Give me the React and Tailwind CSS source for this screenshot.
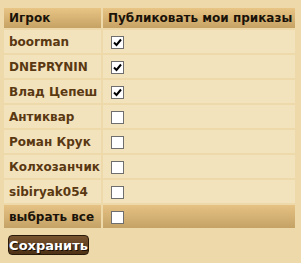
import React from "react";

const rows = [
  ["boorman", true],
  ["DNEPRYNIN", true],
  ["Влад Цепеш", true],
  ["Антиквар", false],
  ["Роман Крук", false],
  ["Колхозанчик", false],
  ["sibiryak054", false],
];

function Box({ checked }) {
  return (
    <span className="inline-flex w-[13px] h-[13px] bg-white border border-[#6e6e6e] items-center justify-center align-middle">
      {checked && (
        <svg width="9" height="9" viewBox="0 0 9 9">
          <path d="M1 4.5 L3.5 7 L8 1.5" stroke="#000" strokeWidth="2" fill="none" />
        </svg>
      )}
    </span>
  );
}

export default function App() {
  return (
    <div
      className="w-[301px] h-[263px] bg-[#eed9ab] pl-[2px] pt-[6px]"
      style={{ fontFamily: '"DejaVu Sans", Verdana, sans-serif' }}
    >
      <table className="border-separate border-spacing-[2px] text-[12px] font-bold">
        <thead>
          <tr className="bg-gradient-to-b from-[#e8c585] to-[#c6a264] text-[#1a1208]">
            <th className="w-[97px] h-[20px] p-0 pl-[5px] text-left">Игрок</th>
            <th className="w-[192px] h-[20px] p-0 pl-[5px] text-left">Публиковать мои приказы</th>
          </tr>
        </thead>
        <tbody>
          {rows.map(([name, c]) => (
            <tr key={name} className="bg-[#f3e3bd] text-[#5a3812]">
              <td className="h-[23px] p-0 pl-[5px]">{name}</td>
              <td className="h-[23px] p-0 pl-[8px]">
                <Box checked={c} />
              </td>
            </tr>
          ))}
          <tr className="bg-gradient-to-b from-[#e6c384] to-[#c4a165] text-[#1a1208]">
            <td className="h-[23px] p-0 pl-[5px]">выбрать все</td>
            <td className="h-[23px] p-0 pl-[8px]">
              <Box checked={false} />
            </td>
          </tr>
        </tbody>
      </table>
      <button
        className="ml-[6px] mt-[5px] w-[81px] h-[20px] rounded-[4px] border border-[#2a1a0a] bg-gradient-to-b from-[#7a5530] to-[#4e3216] text-white text-[13px] font-bold leading-none"
        style={{ textShadow: "1px 1px 0 #1a0e04" }}
      >
        Сохранить
      </button>
    </div>
  );
}
